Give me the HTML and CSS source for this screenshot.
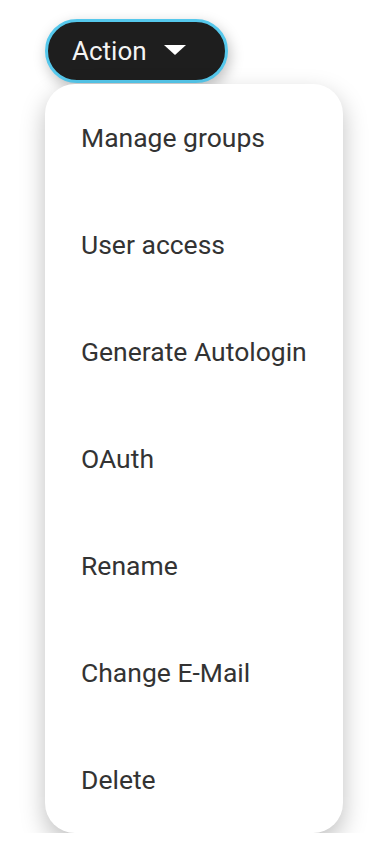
FILE: index.html
```html
<!DOCTYPE html>
<html lang="en">
<head>
    <meta charset="UTF-8">
    <meta name="viewport" content="width=device-width, initial-scale=1.0">
    <title>Action menu</title>
    <link rel="stylesheet" href="styles.css">
</head>
<body>
    <div class="dropdown">
        <button class="action-btn" type="button">
            <span>Action</span>
            <svg class="caret" width="22" height="10" viewBox="0 0 22 10"><path d="M0 0 H22 L11 10 Z" fill="#fff"/></svg>
        </button>

        <ul class="menu">
            <li class="menu-item">Manage groups</li>
            <li class="menu-item">User access</li>
            <li class="menu-item">Generate Autologin</li>
            <li class="menu-item">OAuth</li>
            <li class="menu-item">Rename</li>
            <li class="menu-item">Change E-Mail</li>
            <li class="menu-item">Delete</li>
        </ul>
    </div>
</body>
</html>
```

FILE: styles.css
```css
body {
    margin: 0;
    background: #fff;
    font-family: Roboto, "Liberation Sans", sans-serif;
}
.dropdown {
    padding: 19px 0 0 45px;
    display: flex;
    flex-direction: column;
    align-items: flex-start;
    gap: 1px;
}
.action-btn {
    width: 183px;
    height: 64px;
    box-sizing: border-box;
    border: 3px solid #55c8ec;
    border-radius: 32px;
    background: #1e1e1e;
    color: #f4f4f4;
    font-family: inherit;
    font-size: 26px;
    display: flex;
    align-items: center;
    gap: 17px;
    padding: 0 0 0 24px;
    box-shadow: 2px 5px 14px rgba(0, 0, 0, 0.25);
}
.caret {
    margin-top: -2px;
}
.menu {
    list-style: none;
    margin: 0;
    padding: 0;
    width: 298px;
    background: #fff;
    border-radius: 30px;
    box-shadow: 0 10px 24px rgba(0, 0, 0, 0.25);
}
.menu-item {
    height: 107px;
    display: flex;
    align-items: center;
    padding-left: 36px;
    font-size: 26.5px;
    color: #333;
}
```
